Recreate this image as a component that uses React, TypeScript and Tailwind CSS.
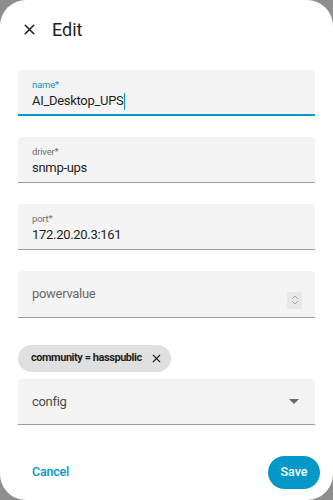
import { X, ChevronsUpDown } from "lucide-react";

function TextField({ label, value, focused }: { label: string; value: string; focused?: boolean }) {
  return (
    <div
      className={`h-[46px] rounded-t-[4px] bg-[#f4f4f4] px-[14px] pt-[9px] ${
        focused ? "border-b-2 border-[#0398c8]" : "border-b border-[#9e9e9e]"
      }`}
    >
      <div className={`text-[9.5px] leading-[12px] tracking-[-0.2px] ${focused ? "text-[#0398c8]" : "text-[#6f6f6f]"}`}>
        {label}
      </div>
      <div className="flex items-center text-[13px] leading-[20px] tracking-[-0.3px] text-[#1f1f1f]">
        {value}
        {focused && <span className="ml-[1px] inline-block h-[17px] w-[1px] bg-[#0398c8]" />}
      </div>
    </div>
  );
}

export default function App() {
  return (
    <div className="h-[500px] w-[333px] bg-[#8e8e8e]" style={{ fontFamily: "Roboto, 'Liberation Sans', sans-serif" }}>
      <div className="flex h-full flex-col rounded-[26px] bg-white">
        <div className="flex h-[56px] items-center px-[21px] pt-[2px]">
          <X className="h-[17px] w-[17px] text-[#1f1f1f]" strokeWidth={2.2} />
          <span className="ml-[14px] text-[18px] text-[#1f1f1f]">Edit</span>
        </div>

        <div className="flex flex-col px-[18px] pt-[14px]">
          <TextField label="name*" value="AI_Desktop_UPS" focused />
          <div className="h-[21px]" />
          <TextField label="driver*" value="snmp-ups" />
          <div className="h-[21px]" />
          <TextField label="port*" value="172.20.20.3:161" />
          <div className="h-[21px]" />

          <div className="flex h-[47px] items-center justify-between rounded-t-[4px] border-b border-[#9e9e9e] bg-[#f4f4f4] pl-[14px] pr-[13px]">
            <span className="text-[13px] tracking-[-0.3px] text-[#6a6a6a]">powervalue</span>
            <div className="mt-[12px] flex h-[17px] w-[15px] items-center justify-center bg-[#e8e8e8]">
              <ChevronsUpDown className="h-[12px] w-[12px] text-[#8a8a8a]" strokeWidth={1.4} />
            </div>
          </div>

          <div className="mt-[27px] flex">
            <div className="flex h-[27px] items-center rounded-full bg-[#e0e0e0] pl-[13px] pr-[8px]">
              <span className="text-[11px] font-bold tracking-[-0.45px] text-[#1f1f1f]">community = hasspublic</span>
              <X className="ml-[8px] h-[13px] w-[13px] text-[#1f1f1f]" strokeWidth={2} />
            </div>
          </div>

          <div className="mt-[7px] flex h-[46px] items-center justify-between rounded-t-[4px] border-b border-[#9e9e9e] bg-[#f4f4f4] pl-[14px] pr-[16px]">
            <span className="text-[13px] tracking-[-0.3px] text-[#4a4a4a]">config</span>
            <svg width="10" height="5" viewBox="0 0 10 5">
              <path d="M0 0 L10 0 L5 5 Z" fill="#6b6b6b" />
            </svg>
          </div>
        </div>

        <div className="mt-auto flex items-center justify-between pb-[11px] pl-[32px] pr-[13px]">
          <span className="text-[12.5px] font-medium tracking-[-0.2px] text-[#0398c8]">Cancel</span>
          <div className="flex h-[33px] w-[52px] items-center justify-center rounded-full bg-[#0398c8] text-[12.5px] font-medium text-white">
            Save
          </div>
        </div>
      </div>
    </div>
  );
}
